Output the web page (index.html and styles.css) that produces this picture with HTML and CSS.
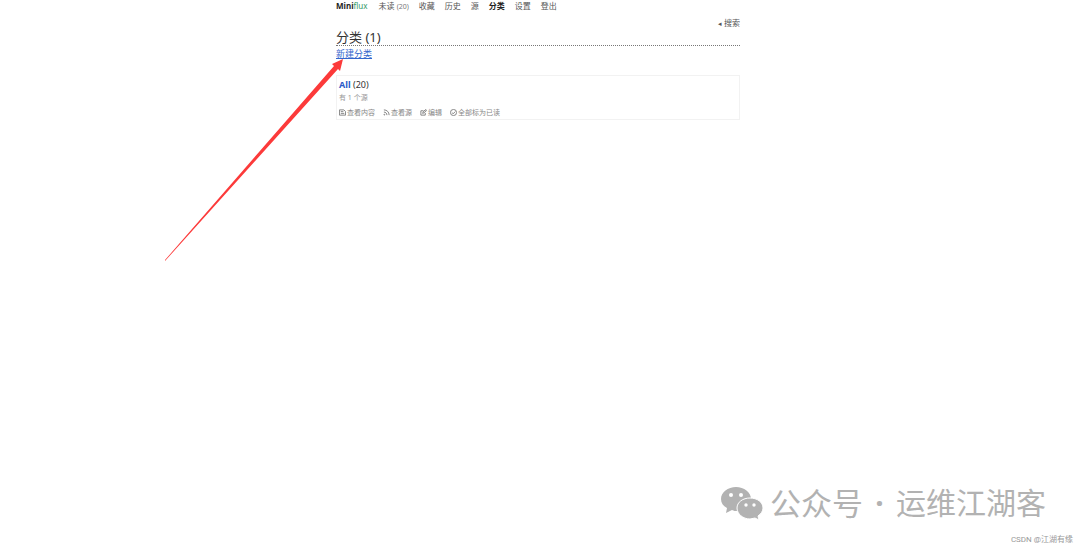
FILE: index.html
```
<!DOCTYPE html>
<html lang="zh-CN">
<head>
    <meta charset="UTF-8">
    <meta name="viewport" content="width=device-width, initial-scale=1">
    <title>分类 - Miniflux</title>
    <link rel="stylesheet" href="styles.css">
</head>
<body>
    <div class="container">
        <header class="header">
            <nav class="nav">
                <a class="logo" href="#">Mini<span>flux</span></a>
                <ul>
                    <li><a href="#">未读 <span class="counter">(20)</span></a></li>
                    <li><a href="#">收藏</a></li>
                    <li><a href="#">历史</a></li>
                    <li><a href="#">源</a></li>
                    <li class="active"><a href="#">分类</a></li>
                    <li><a href="#">设置</a></li>
                    <li><a href="#">登出</a></li>
                </ul>
            </nav>
            <div class="search">
                <a href="#"><span class="marker">◂</span> 搜索</a>
            </div>
        </header>
        <main>
            <section class="page-header">
                <h1>分类 (1)</h1>
                <a href="#">新建分类</a>
            </section>
            <article class="item">
                <h2 class="item-title"><a href="#">All</a> (20)</h2>
                <p class="item-meta">有 1 个源</p>
                <ul class="item-actions">
                    <li><a href="#">
                        <svg class="icon" viewBox="0 0 16 16"><path d="M1 2h10l4 4v8H1zM4 6h6M4 10h8"/></svg>
                        查看内容</a></li>
                    <li><a href="#">
                        <svg class="icon" viewBox="0 0 16 16"><path d="M2 2c7 0 12 5 12 12M2 7c4 0 7 3 7 7"/><circle cx="3" cy="13" r="1"/></svg>
                        查看源</a></li>
                    <li><a href="#">
                        <svg class="icon" viewBox="0 0 16 16"><path d="M8 4H2v10h10V9M6 10l1-3 6-6 2 2-6 6zM11 3l2 2"/></svg>
                        编辑</a></li>
                    <li><a href="#">
                        <svg class="icon" viewBox="0 0 16 16"><circle cx="8" cy="8" r="7"/><path d="M5 8l2 3 5-5"/></svg>
                        全部标为已读</a></li>
                </ul>
            </article>
        </main>
    </div>

    <!-- arrow pointing at the "new category" link -->
    <svg class="arrow" width="180" height="203" viewBox="0 0 180 203">
        <path d="M0 201 169 7 167 5 178 0 175 12 173 10 0 202z"/>
    </svg>

    <footer class="watermark">
        <div class="account">
            <svg class="wechat" viewBox="0 0 42 35">
                <path d="M15 1C7 1 0 6 0 13c0 4 2 7 6 9l-1 5 6-3c2 1 3 1 5 1 8 0 14-5 14-12S23 1 15 1z"/>
                <path class="front" d="M29 12c-7 0-13 4-13 10s6 11 13 11l5-1 4 2-1-4c3-2 5-5 5-8 0-6-6-10-13-10z"/>
                <g class="eyes"><circle cx="10" cy="9" r="2"/><circle cx="20" cy="9" r="2"/><circle cx="25" cy="19" r="1.7"/><circle cx="33" cy="19" r="1.7"/></g>
            </svg>
            <span class="kind">公众号</span>
            <span class="dot">·</span>
            <span>运维江湖客</span>
        </div>
        <div class="credit">CSDN @江湖有缘</div>
    </footer>
</body>
</html>
```
FILE: styles.css
```
body {
    margin: 0;
    padding: 0 4px 0 0;
    background: #fff;
    color: #555;
    font-family: "Noto Sans", "Noto Sans CJK SC", sans-serif;
    font-size: 8px;
    line-height: 12px;
}
a {
    color: inherit;
    text-decoration: none;
}
ul, h1, h2, p {
    margin: 0;
    padding: 0;
    list-style: none;
    font-weight: normal;
}
.container {
    max-width: 404px;
    margin: 0 auto;
}

.nav, .nav ul {
    display: flex;
}
.nav {
    gap: 11px;
}
.nav ul {
    gap: 10px;
}
.logo {
    color: #222;
    font-weight: bold;
}
.logo span {
    color: #396;
    font-weight: normal;
}
.counter {
    color: #777;
    font-size: 7px;
}
.active {
    color: #222;
    font-weight: bold;
}
.search {
    padding-top: 4px;
    line-height: 11px;
    text-align: right;
}
.marker {
    font-size: 7px;
}

.page-header {
    margin-bottom: 14px;
}
.page-header h1 {
    border-bottom: 1px dotted #777;
    color: #333;
    font-size: 13px;
    line-height: 16px;
}
.page-header a {
    display: block;
    color: #36c;
    font-size: 9px;
    line-height: 15px;
    text-decoration: underline;
}

.item {
    padding: 2px 2px 0;
    border: 1px solid #f2f2f2;
}
.item-title {
    color: #333;
    font-size: 9px;
    line-height: 14px;
}
.item-title a {
    color: #2a5bc8;
    font-weight: bold;
}
.item-meta {
    color: #999;
    font-size: 7px;
}
.item-actions {
    display: flex;
    gap: 8px;
    padding-top: 2px;
    color: #888;
    font-size: 7px;
    line-height: 13px;
}
.item-actions a {
    display: flex;
    align-items: center;
    gap: 1px;
}
.icon {
    width: 7px;
    height: 7px;
    fill: none;
    stroke: #777;
    stroke-width: 2;
}

.arrow {
    position: absolute;
    top: 59px;
    left: 165px;
    fill: #fc3a3a;
}

.watermark {
    position: absolute;
    right: 7px;
    bottom: 1px;
    color: #b2b2b2;
}
.account {
    display: flex;
    align-items: center;
    margin: 0 27px 9px 0;
    font-size: 30px;
    line-height: 44px;
}
.wechat {
    width: 42px;
    height: 35px;
    margin-right: 7px;
    fill: #b2b2b2;
}
.front {
    stroke: #fff;
}
.eyes {
    fill: #fff;
}
.kind {
    font-size: 31px;
}
.dot {
    width: 33px;
    font-weight: bold;
    text-align: center;
}
.credit {
    color: #999;
    font-family: Roboto, "Noto Sans CJK SC", sans-serif;
    text-align: right;
}
```
